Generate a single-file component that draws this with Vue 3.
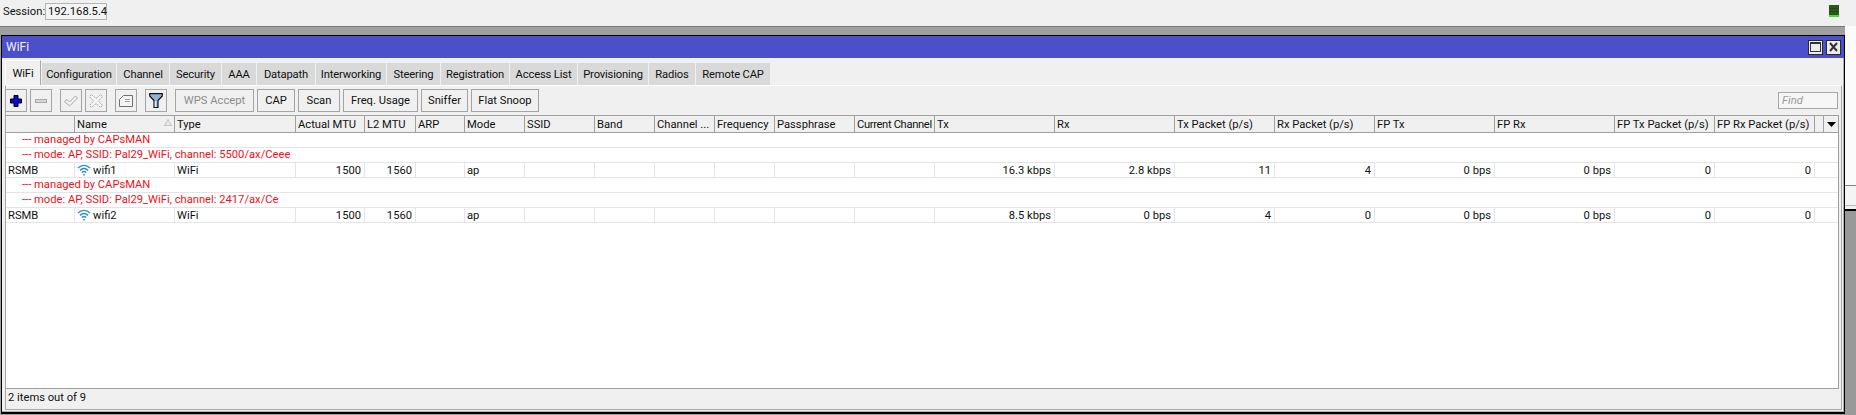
<script setup>
const tabs = [
  ['WiFi', 36], ['Configuration', 74], ['Channel', 52], ['Security', 51], ['AAA', 34], ['Datapath', 58],
  ['Interworking', 70], ['Steering', 53], ['Registration', 68], ['Access List', 67], ['Provisioning', 70],
  ['Radios', 46], ['Remote CAP', 74]
]
const textButtons = [
  ['WPS Accept', 79, true], ['CAP', 38, false], ['Scan', 42, false], ['Freq. Usage', 75, false],
  ['Sniffer', 47, false], ['Flat Snoop', 68, false]
]
const cols = [
  ['', 69], ['Name', 100], ['Type', 121], ['Actual MTU', 69], ['L2 MTU', 51], ['ARP', 49], ['Mode', 60], ['SSID', 70],
  ['Band', 60], ['Channel ...', 60], ['Frequency', 60], ['Passphrase', 80], ['Current Channel', 80], ['Tx', 120],
  ['Rx', 120], ['Tx Packet (p/s)', 100], ['Rx Packet (p/s)', 100], ['FP Tx', 120], ['FP Rx', 120],
  ['FP Tx Packet (p/s)', 100], ['FP Rx Packet (p/s)', 100], ['', 9]
]
const rightCols = new Set([3, 4, 13, 14, 15, 16, 17, 18, 19, 20])
const rows = [
  { note: ['--- managed by CAPsMAN', '--- mode: AP, SSID: Pal29_WiFi, channel: 5500/ax/Ceee'],
    cells: ['RSMB', 'wifi1', 'WiFi', '1500', '1560', '', 'ap', '', '', '', '', '', '', '16.3 kbps', '2.8 kbps', '11', '4', '0 bps', '0 bps', '0', '0', ''] },
  { note: ['--- managed by CAPsMAN', '--- mode: AP, SSID: Pal29_WiFi, channel: 2417/ax/Ce'],
    cells: ['RSMB', 'wifi2', 'WiFi', '1500', '1560', '', 'ap', '', '', '', '', '', '', '8.5 kbps', '0 bps', '4', '0', '0 bps', '0 bps', '0', '0', ''] }
]
</script>

<template>
  <div class="root">
    <header class="session">
      <span class="session-label">Session:</span>
      <span class="session-value">192.168.5.4</span>
      <span class="spacer"></span>
      <span class="meter"></span>
    </header>
    <div class="workspace">
      <main class="desktop">
        <section class="window">
          <div class="titlebar">
            <span class="title">WiFi</span>
            <span class="spacer"></span>
            <span class="win-btn">
              <svg width="13" height="12" viewBox="0 0 13 12"><rect x="1.5" y="1.5" width="10" height="9" fill="none" stroke="#333" stroke-width="1"/><path d="M1 2h11" stroke="#333" stroke-width="2"/></svg>
            </span>
            <span class="win-btn">
              <svg width="13" height="12" viewBox="0 0 13 12"><path d="M3 2l7 8M10 2l-7 8" stroke="#333" stroke-width="2"/></svg>
            </span>
          </div>
          <div class="body">
            <nav class="tabs">
              <span v-for="(t, i) in tabs" :key="t[0]" class="tab" :class="{ active: i === 0 }" :style="{ width: t[1] + 'px' }">{{ t[0] }}</span>
            </nav>
            <div class="frame">
              <div class="toolbar">
                <button class="tool">
                  <svg width="14" height="14" viewBox="0 0 14 14"><path d="M5 1.500h4v3.500h3.500v4H9v3.500H5V9H1.500V5H5z" fill="#0a0ad2" stroke="#000" stroke-width="1"/></svg>
                </button>
                <button class="tool">
                  <svg width="14" height="14" viewBox="0 0 14 14"><rect x="1.500" y="5.500" width="11" height="3" fill="#d8d8d8" stroke="#a8a8a8"/></svg>
                </button>
                <button class="tool gap">
                  <svg width="16" height="16" viewBox="0 0 16 16"><path d="M1.500 8.500l2.500-2 2.500 2.500 6-6 2 2-8 8z" fill="#f4f4f4" stroke="#a8a8a8"/></svg>
                </button>
                <button class="tool near">
                  <svg width="16" height="16" viewBox="0 0 16 16"><path d="M3.500 1.500l4.500 4 4.500-4 2 2-4 4.500 4 4.500-2 2-4.500-4-4.500 4-2-2 4-4.500-4-4.500z" fill="#f4f4f4" stroke="#a8a8a8" stroke-dasharray="2 1"/></svg>
                </button>
                <button class="tool gap">
                  <svg width="14" height="12" viewBox="0 0 14 12"><path d="M.5 4.500l4-4h9v11H.5z" fill="#f4f4f4" stroke="#707070"/><path d="M6 4.500h5M6 6.500h5" stroke="#a0a0a0"/></svg>
                </button>
                <button class="tool gap">
                  <svg width="14" height="15" viewBox="0 0 14 15"><path d="M.7.700h12.600v2.200L9 7.500v7H5v-7L.7 2.900z" fill="#8fb4d8" stroke="#111" stroke-width="1.200"/><path d="M6.500 8v6" stroke="#e8f0f8" stroke-width="1.500"/></svg>
                </button>
                <button
                  v-for="(b, i) in textButtons"
                  :key="b[0]"
                  class="text-btn"
                  :class="{ disabled: b[2], first: i === 0 }"
                  :style="{ width: b[1] + 'px' }"
                >{{ b[0] }}</button>
                <span class="spacer"></span>
                <span class="find">Find</span>
              </div>
              <div class="table">
                <div class="head">
                  <span
                    v-for="(c, i) in cols"
                    :key="i"
                    class="hcell"
                    :class="{ tight: c[0] === 'Current Channel' }"
                    :style="{ width: c[1] + 'px' }"
                  >{{ c[0] }}<svg v-if="c[0] === 'Name'" class="sort" width="8" height="7" viewBox="0 0 8 7"><path d="M4 .5L7.500 6.500H.5z" fill="#e8e8e8" stroke="#c4c4c4"/></svg></span>
                  <span class="menu-cell"><svg width="9" height="5" viewBox="0 0 9 5"><path d="M0 0h9L4.500 5z" fill="#000"/></svg></span>
                </div>
                <template v-for="(r, ri) in rows" :key="ri">
                  <div v-for="n in r.note" :key="n" class="note-row">{{ n }}</div>
                  <div class="row">
                    <span
                      v-for="(v, i) in r.cells"
                      :key="i"
                      class="cell"
                      :class="{ right: rightCols.has(i), last: i === r.cells.length - 1 }"
                      :style="{ width: cols[i][1] + 'px' }"
                    >
                      <svg v-if="i === 1" class="wifi" width="14" height="14" viewBox="0 0 15 15" fill="none" stroke="#2a8fd8" stroke-width="1.500">
                        <path d="M1 5.500C4.500 1.500 10.500 1.500 14 5.500"/>
                        <path d="M3.200 8C5.500 5.200 9.500 5.200 11.800 8"/>
                        <path d="M5.300 10.300C6.500 8.800 8.500 8.800 9.700 10.300"/>
                        <circle cx="7.500" cy="12.500" r="1" fill="#2a8fd8" stroke="none"/>
                      </svg>{{ v }}
                    </span>
                  </div>
                </template>
              </div>
              <div class="status">2 items out of 9</div>
            </div>
          </div>
        </section>
      </main>
      <aside class="side">
        <div class="side-white"></div>
        <div class="side-band"></div>
        <div class="side-gray"></div>
      </aside>
    </div>
  </div>
</template>

<style scoped>
.root {
  width: 1856px;
  height: 415px;
  overflow: hidden;
  display: flex;
  flex-direction: column;
  background: #f0f0f0;
  font-family: Roboto, "Liberation Sans", Arial, sans-serif;
  font-size: 11.2px;
  color: #111;
}
.spacer { flex: 1; }
.session {
  height: 26px;
  flex: none;
  box-sizing: border-box;
  display: flex;
  align-items: flex-start;
  padding: 3px 17px 0 3px;
}
.session-label { line-height: 17px; width: 42px; }
.session-value {
  box-sizing: border-box;
  width: 62px;
  height: 17px;
  border: 1px solid #b4b4b4;
  background: #f4f4f4;
  line-height: 15px;
  padding-left: 2px;
}
.meter {
  width: 10px;
  height: 12px;
  margin-top: 2px;
  background: linear-gradient(#2a5a1a 0 3px, #1f4a12 3px 4px, #2a5a1a 4px 6px, #1f4a12 6px 7px, #2a5a1a 7px 10px, #48d838 10px);
}
.workspace { flex: 1; display: flex; min-height: 0; }
.desktop {
  width: 1845px;
  flex: none;
  box-sizing: border-box;
  background: #a0a0a0;
  border-top: 1px solid #777;
  padding: 8px 0 1px 1px;
  display: flex;
}
.window {
  flex: 1;
  display: flex;
  flex-direction: column;
  border: 1px solid #000;
  border-bottom-width: 2px;
  background: #f0f0f0;
  box-shadow: inset -1px 0 0 #b0b0b0, inset 0 -1px 0 #b0b0b0;
}
.titlebar {
  height: 22px;
  flex: none;
  background: #4b50c8;
  display: flex;
  align-items: center;
  padding: 0 3px 0 4px;
  color: #f2f2f2;
  font-size: 12px;
}
.win-btn {
  box-sizing: border-box;
  width: 15px;
  height: 15px;
  margin-left: 3px;
  background: #ececec;
  border: 1px solid #2a2a2a;
  display: flex;
  align-items: center;
  justify-content: center;
}
.body { flex: 1; display: flex; flex-direction: column; padding: 0 0 2px 3px; min-height: 0; }
.tabs { height: 27px; flex: none; display: flex; align-items: flex-end; gap: 1px; box-sizing: border-box; }
.tab {
  box-sizing: border-box;
  height: 22px;
  background: #d9d9d9;
  text-align: center;
  line-height: 24px;
  letter-spacing: -.15px;
  flex: none;
}
.tab.active {
  height: 25px;
  background: #f0f0f0;
  border-top: 1px solid #fff;
  border-left: 1px solid #fff;
  border-right: 1px solid #a8a8a8;
  line-height: 25px;
}
.frame {
  flex: 1;
  display: flex;
  flex-direction: column;
  min-height: 0;
  margin-right: 2px;
  border-top: 1px solid #fff;
  border-left: 1px solid #a8a8a8;
  border-right: 1px solid #a8a8a8;
  border-bottom: 1px solid #a8a8a8;
}
.toolbar {
  height: 29px;
  flex: none;
  display: flex;
  align-items: flex-start;
  margin-left: -1px;
  padding: 3px 3px 0 0;
  box-sizing: border-box;
}
.tool, .text-btn {
  box-sizing: border-box;
  height: 23px;
  border: 1px solid #a4a4a4;
  background: #f0f0f0;
  padding: 0;
  margin: 0 0 0 3px;
  font: inherit;
  color: #111;
  display: flex;
  align-items: center;
  justify-content: center;
  flex: none;
}
.tool { width: 22px; margin-left: 0; }
.tool + .tool { margin-left: 3px; }
.tool.gap { margin-left: 8px; }
.tool.near { margin-left: 3px; }
.text-btn.first { margin-left: 8px; }
.text-btn.disabled { color: #8c8c8c; }
.find {
  box-sizing: border-box;
  width: 60px;
  height: 17px;
  margin-top: 3px;
  border: 1px solid #a8a8a8;
  background: #f6f6f6;
  color: #9a9a9a;
  font-style: italic;
  line-height: 15px;
  padding-left: 3px;
}
.table {
  flex: 1;
  min-height: 0;
  background: #fff;
  border-top: 1px solid #a0a0a0;
  border-bottom: 1px solid #a0a0a0;
  border-right: 1px solid #a0a0a0;
  margin-right: 2px;
}
.head {
  height: 17px;
  box-sizing: border-box;
  display: flex;
  background: #f0f0f0;
  border-bottom: 1px solid #a0a0a0;
}
.hcell {
  box-sizing: border-box;
  flex: none;
  position: relative;
  border-right: 1px solid #a0a0a0;
  padding-left: 2px;
  line-height: 17px;
  white-space: nowrap;
  overflow: hidden;
}
.hcell.tight { letter-spacing: -.35px; }
.sort { position: absolute; right: 2px; top: 3px; }
.menu-cell {
  flex: 1;
  display: flex;
  align-items: center;
  justify-content: center;
}
.note-row {
  height: 15px;
  box-sizing: border-box;
  border-bottom: 1px solid #e4e4e4;
  color: #f01020;
  padding-left: 16px;
  line-height: 14px;
  white-space: nowrap;
}
.row { height: 15px; box-sizing: border-box; display: flex; border-bottom: 1px solid #e4e4e4; }
.cell {
  box-sizing: border-box;
  flex: none;
  display: flex;
  align-items: center;
  border-right: 1px solid #e4e4e4;
  padding: 0 3px 0 2px;
  height: 14px;
  white-space: nowrap;
  overflow: hidden;
}
.cell.right { justify-content: flex-end; }
.cell.last { border-right: 0; }
.wifi { margin-right: 2px; flex: none; }
.status {
  height: 20px;
  flex: none;
  padding-left: 2px;
  line-height: 17px;
  background: #f0f0f0;
}
.side { flex: 1; display: flex; flex-direction: column; }
.side-white { height: 159px; background: #fbfbfb; }
.side-band { height: 24px; background: linear-gradient(#808080 0 1px, #f4f4f4 1px 20px, #bbb 20px 21px, #f0f0f0 21px); }
.side-gray { flex: 1; background: #999; border-top: 2px solid #000; }
</style>
